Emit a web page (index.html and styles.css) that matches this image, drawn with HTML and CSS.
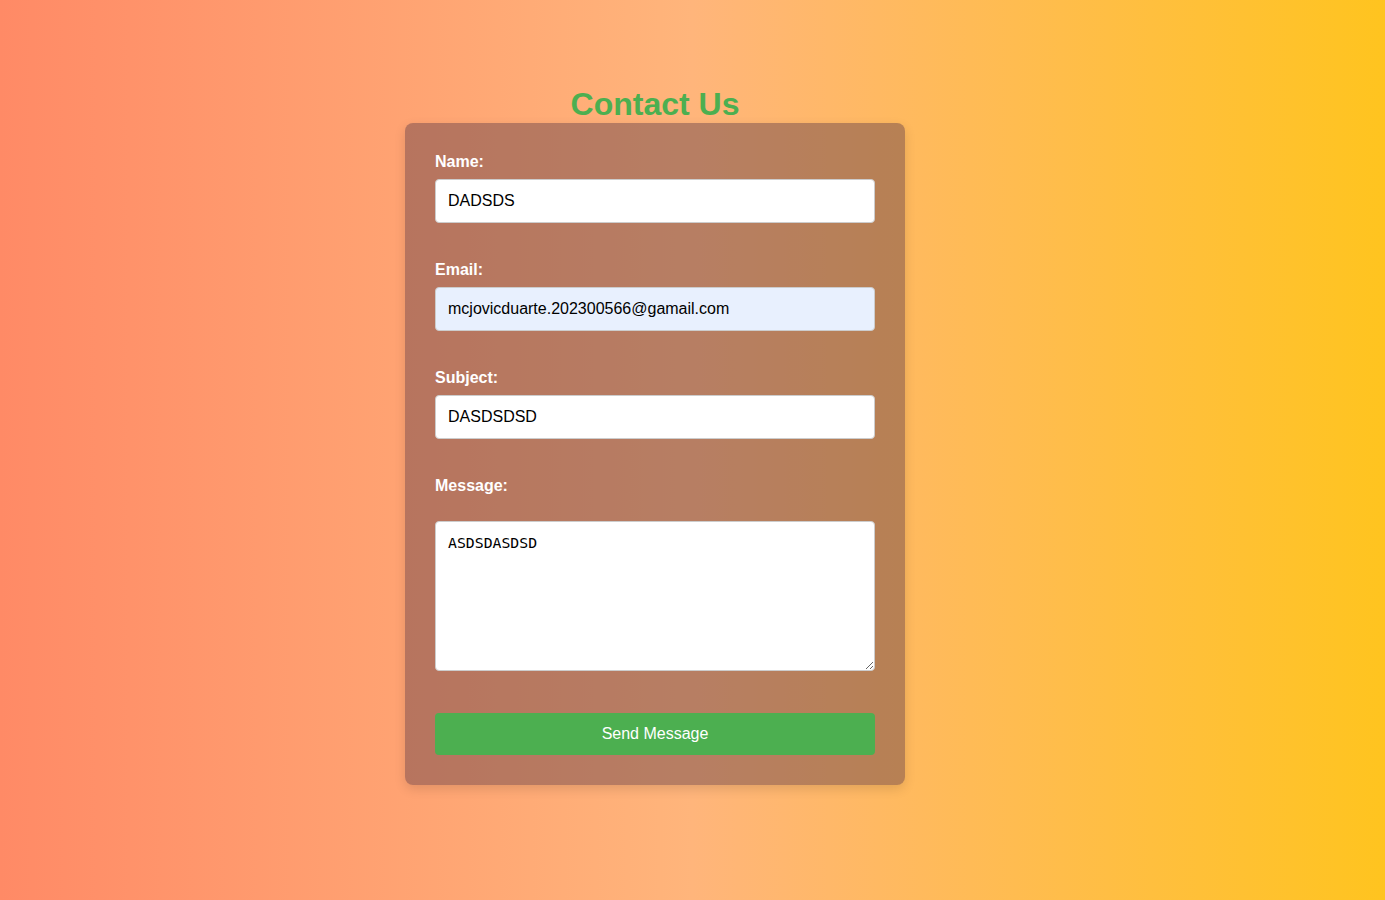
FILE: index.html
```html
<!DOCTYPE html>
<html lang="en">
<head>
<meta charset="utf-8">
<title>Contact Us</title>
<link rel="stylesheet" href="styles.css">
</head>
<body>
<main class="page">
  <h2 class="title">Contact Us</h2>
  <form class="card">
    <div class="group">
      <label class="label" for="name">Name:</label>
      <input class="field" id="name" type="text" value="DADSDS">
    </div>
    <div class="group">
      <label class="label" for="email">Email:</label>
      <input class="field field-autofill" id="email" type="email" value="mcjovicduarte.202300566@gamail.com">
    </div>
    <div class="group">
      <label class="label" for="subject">Subject:</label>
      <input class="field" id="subject" type="text" value="DASDSDSD">
    </div>
    <div class="group group-message">
      <label class="label label-message" for="message">Message:</label>
      <textarea class="area" id="message">ASDSDASDSD</textarea>
    </div>
    <button class="btn" type="button">Send Message</button>
  </form>
</main>
</body>
</html>
```

FILE: styles.css
```css
html, body {
  margin: 0;
  padding: 0;
  height: 100%;
}

body {
  font-family: "Liberation Sans", Arial, sans-serif;
  background: linear-gradient(to right, #ff8a66 0%, #ffb57b 50%, #ffc41f 100%);
  min-height: 900px;
}

.page {
  display: flex;
  flex-direction: column;
  align-items: center;
  padding: 86px 75px 0 0;
}

.title {
  margin: 0;
  font-size: 32px;
  font-weight: bold;
  line-height: 37px;
  color: #4caf50;
}

.card {
  box-sizing: border-box;
  width: 500px;
  padding: 30px;
  border-radius: 8px;
  background: rgba(95, 60, 70, 0.45);
  box-shadow: 0 4px 12px rgba(0, 0, 0, 0.12);
  display: flex;
  flex-direction: column;
}

.group {
  display: flex;
  flex-direction: column;
  margin-bottom: 38px;
}

.group-message {
  margin-bottom: 42px;
}

.label {
  display: block;
  font-size: 16px;
  font-weight: bold;
  line-height: 18px;
  color: #ffffff;
  margin-bottom: 8px;
}

.label-message {
  margin-bottom: 26px;
}

.field {
  box-sizing: border-box;
  width: 100%;
  height: 44px;
  padding: 12px;
  border: 1px solid #cccccc;
  border-radius: 4px;
  background: #ffffff;
  color: #000000;
  font-family: "Liberation Sans", Arial, sans-serif;
  font-size: 16px;
  outline: none;
}

.field-autofill {
  background: #e8f0fe;
}

.area {
  box-sizing: border-box;
  width: 100%;
  height: 150px;
  padding: 12px;
  border: 1px solid #cccccc;
  border-radius: 4px;
  background: #ffffff;
  color: #000000;
  font-family: "DejaVu Sans Mono", monospace;
  font-size: 14.8px;
  resize: vertical;
  outline: none;
}

.btn {
  box-sizing: border-box;
  width: 100%;
  height: 42px;
  padding: 12px;
  border: none;
  border-radius: 4px;
  background: #4caf50;
  color: #ffffff;
  font-family: "Liberation Sans", Arial, sans-serif;
  font-size: 16px;
  cursor: pointer;
}
```
